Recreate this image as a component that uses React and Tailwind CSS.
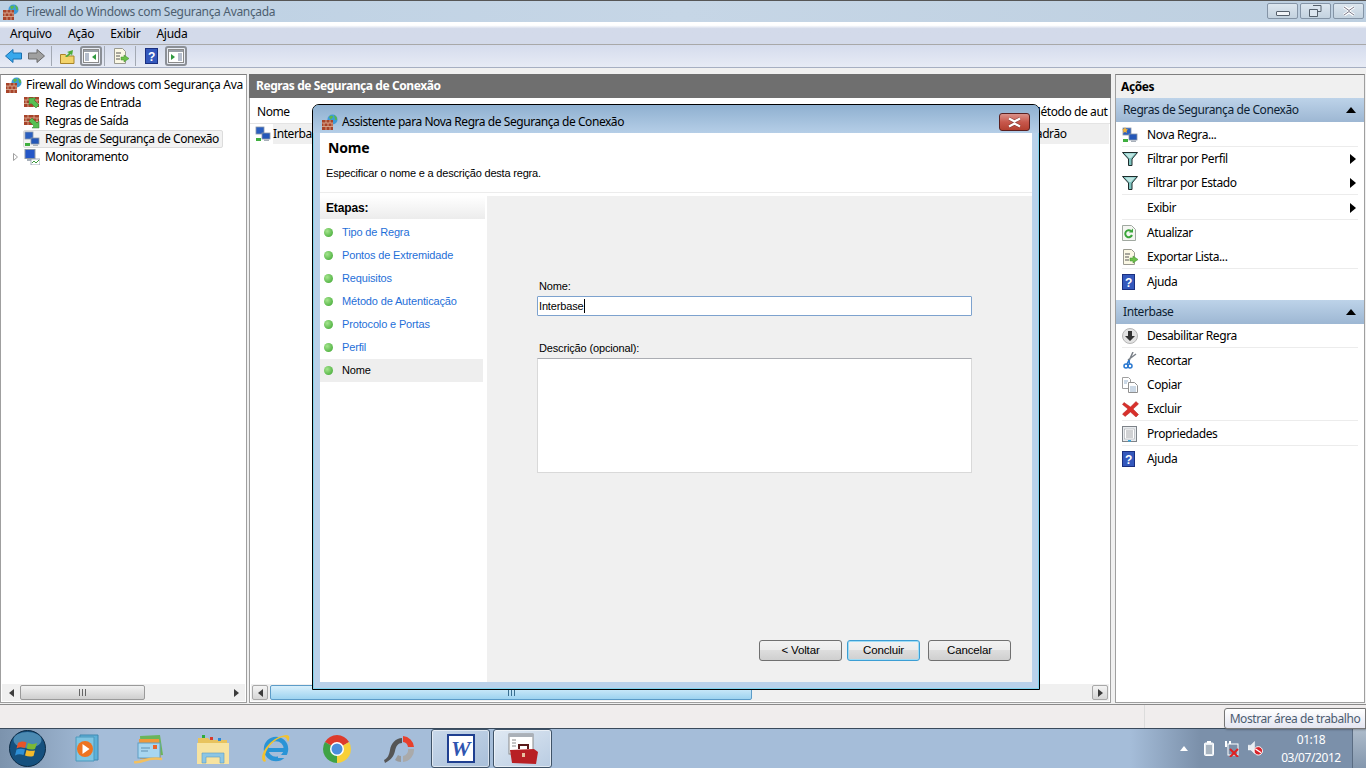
import React from "react";

const Sep = ({ className = "" }) => <div className={`w-px h-[20px] bg-[#a3a9b3] ${className}`} />;

function Brick({ s = 16 }) {
  return (
    <svg width={s} height={s} viewBox="0 0 16 16" className="shrink-0">
      <circle cx="10.500" cy="5.500" r="5" fill="#3f9bd8" />
      <path d="M7 3c2-2 4-1 4 0s-2 1-2 3M12 1c2 1 3 2 3 4s-2 1-2 0" fill="#5cb848" />
      <rect x="0" y="6" width="11" height="10" fill="#a8442a" />
      <path d="M0 9h11M0 12.500h11M4 6v3M8 6v3M2 9v3.500M6 9v3.500M10 9v3.500M4 12.500v3.500M8 12.500v3.500" stroke="#dcb49c" strokeWidth=".8" />
    </svg>
  );
}

function RuleBrick({ out }) {
  return (
    <svg width="16" height="16" viewBox="0 0 16 16" className="shrink-0">
      <rect x="0" y="2" width="15" height="10" fill="#a8442a" />
      <path d="M0 5h15M0 8.500h15M4 2v3M10 2v3M2 5v3.500M7 5v3.500M13 5v3.500M4 8.500v3.500M10 8.500v3.500" stroke="#dcb49c" strokeWidth=".8" />
      {out
        ? <path d="M15 15H8l2-2-5-5 3-3 5 5 2-2z" fill="#57c052" stroke="#2c7d2c" strokeWidth=".5" />
        : <path d="M5 3h7l-2 2 5 5-3 3-5-5-2 2z" fill="#57c052" stroke="#2c7d2c" strokeWidth=".5" />}
    </svg>
  );
}

function Computers({ star }) {
  return (
    <svg width="16" height="16" viewBox="0 0 16 16" className="shrink-0">
      <rect x="1" y="1" width="8" height="7" fill="#2a5fc0" stroke="#8a97a8" strokeWidth=".8" />
      <rect x="7" y="7" width="8" height="6" fill="#2457b8" stroke="#8a97a8" strokeWidth=".8" />
      <rect x="9" y="13.500" width="5" height="1.500" fill="#a8b0ba" />
      <rect x="1" y="12" width="5" height="3" fill="#3faf3f" />
      {star && <path d="M3 0l1 2 2 .5-1.500 1.500.5 2-2-1-2 1 .5-2L0 2.500 2 2z" fill="#f2b33a" />}
    </svg>
  );
}

function Monitor() {
  return (
    <svg width="16" height="16" viewBox="0 0 16 16" className="shrink-0">
      <rect x="1" y="0.500" width="10" height="9" fill="#2457c8" stroke="#8a97a8" />
      <rect x="3" y="10" width="6" height="2" fill="#a8b0ba" />
      <rect x="7" y="10" width="9" height="6" fill="#fff" stroke="#8a97a8" strokeWidth=".8" />
      <path d="M8 14l2-2 2 2 3-3" stroke="#3a9a3a" fill="none" />
    </svg>
  );
}

function Funnel() {
  return (
    <svg width="16" height="14" viewBox="0 0 16 14" className="shrink-0">
      <path d="M.500 .500h15L10 7v6.500H6.500V7z" fill="#7fc4c0" stroke="#1d2b2b" />
      <path d="M3 1.500h10L9 6H7z" fill="#bfe6e2" />
    </svg>
  );
}

function Help() {
  return (
    <svg width="13" height="16" viewBox="0 0 13 16" className="shrink-0">
      <rect x=".500" y=".500" width="12" height="15" fill="#3458bc" stroke="#1a2f80" />
      <text x="6.500" y="12.500" textAnchor="middle" fontSize="12" fontWeight="700" fill="#fff" fontFamily="Liberation Sans, sans-serif">?</text>
    </svg>
  );
}

function ExportIcon() {
  return (
    <svg width="16" height="16" viewBox="0 0 16 16" className="shrink-0">
      <path d="M1.500 .500h8l3 3v12h-11z" fill="#fbf8e4" stroke="#9a9a90" />
      <path d="M3 5h5M3 8h4M3 11h4" stroke="#555" />
      <path d="M8 9h3V7l5 3.500-5 3.500v-2H8z" fill="#6cc04a" stroke="#3e8e2a" strokeWidth=".5" />
    </svg>
  );
}

function Refresh() {
  return (
    <svg width="14" height="16" viewBox="0 0 14 16" className="shrink-0">
      <path d="M.500 .500h9l4 4v11H.500z" fill="#f4f6f2" stroke="#a0a8a0" />
      <path d="M10 10a3.500 3.500 0 1 1-1-4" fill="none" stroke="#3aa53a" strokeWidth="2" />
      <path d="M11 3.500v4H7z" fill="#3aa53a" />
    </svg>
  );
}

function Disable() {
  return (
    <svg width="16" height="16" viewBox="0 0 16 16" className="shrink-0">
      <circle cx="8" cy="8" r="7.500" fill="#e3e3e3" stroke="#b5b5b5" />
      <path d="M6 3h4v5h3l-5 5-5-5h3z" fill="#333" />
    </svg>
  );
}

function Scissors() {
  return (
    <svg width="16" height="17" viewBox="0 0 16 17" className="shrink-0">
      <path d="M11 0L6.500 10M14 2L6 8" stroke="#7a8088" strokeWidth="1.500" />
      <circle cx="4" cy="14" r="2" fill="none" stroke="#2a78d0" strokeWidth="1.500" />
      <circle cx="8" cy="14" r="2" fill="none" stroke="#2a78d0" strokeWidth="1.500" />
      <path d="M5 12l2-4M7.500 12L7 8" stroke="#2a78d0" strokeWidth="1.500" />
    </svg>
  );
}

function Copy() {
  return (
    <svg width="16" height="16" viewBox="0 0 16 16" className="shrink-0">
      <path d="M.500 .500h6l2 2v9h-8z" fill="#fff" stroke="#a0a0a0" />
      <path d="M6.500 5.500h6l3 3v7h-9z" fill="#fff" stroke="#909090" />
      <path d="M8 10h6M8 12h6M8 14h6M2 4h4M2 6h3" stroke="#7f9fc0" strokeWidth=".8" />
    </svg>
  );
}

function Delete() {
  return (
    <svg width="17" height="16" viewBox="0 0 17 16" className="shrink-0">
      <path d="M2 1.500L8.500 6 14 .500 16.500 3 11 8l5.500 5.500L14 16l-5.500-5L3 15.500.500 13 6 8 .500 3.500z" fill="#d9302b" stroke="#b0201c" strokeWidth=".5" />
    </svg>
  );
}

function Props() {
  return (
    <svg width="15" height="16" viewBox="0 0 15 16" className="shrink-0">
      <rect x=".500" y=".500" width="14" height="15" fill="#e8ebee" stroke="#7d8288" />
      <rect x="2.500" y="3" width="10" height="10" fill="#fff" stroke="#a5a9ad" strokeWidth=".6" />
      <path d="M4 5h7M4 7h7M4 9h7M4 11h7" stroke="#8a8e92" strokeWidth=".8" />
      <rect x="6" y="14" width="3" height="1.500" fill="#35a8e0" />
    </svg>
  );
}

function PaneIcon({ right }) {
  return (
    <div className="w-[22px] h-[20px] border-2 border-[#8b8f96] rounded-[3px] bg-[#e8ecf4] flex items-center justify-center shrink-0">
      <svg width="16" height="14" viewBox="0 0 16 14">
        <rect x=".500" y=".500" width="15" height="13" fill="#fff" stroke="#8a8a8a" />
        <rect x="1" y="1" width="14" height="2" fill="#9aa0a8" />
        {right ? (
          <>
            <path d="M3 5l4 3-4 3z" fill="#2f9a3f" />
            <path d="M10 5h4M10 7h4M10 9h4M10 11h4" stroke="#6b7c99" />
          </>
        ) : (
          <>
            <path d="M2 5h4M2 7h4M2 9h4M2 11h4" stroke="#6b7c99" />
            <path d="M13 5l-4 3 4 3z" fill="#2f9a3f" />
          </>
        )}
      </svg>
    </div>
  );
}

function ScrollBar({ className, thumb, blue }) {
  const Arrow = ({ left }) => (
    <div className={`w-[16px] h-[15px] flex items-center justify-center shrink-0 ${blue ? "bg-gradient-to-b from-[#f4f4f4] to-[#d6d6d6] border border-[#a8a8a8] rounded-[2px]" : ""}`}>
      <svg width="5" height="8" viewBox="0 0 5 8">
        <path d={left ? "M5 0v8L0 4z" : "M0 0v8l5-4z"} fill="#3c3c3c" />
      </svg>
    </div>
  );
  return (
    <div className={`h-[17px] bg-[#f0f0f0] flex items-center px-[1px] ${className}`}>
      <Arrow left />
      <div className="flex-1 h-[15px] flex">
        <div
          className={`h-full rounded-[2px] border flex items-center justify-center ${thumb} ${
            blue
              ? "bg-gradient-to-b from-[#d8effb] to-[#9dd3f0] border-[#5c9cc8]"
              : "bg-gradient-to-b from-[#f2f2f2] to-[#cfcfcf] border-[#9a9a9a]"
          }`}
        >
          <div className={`w-[7px] h-[7px] border-x-[1px] ${blue ? "border-[#3a6f90]" : "border-[#666]"} flex justify-center`}>
            <div className={`w-px h-full ${blue ? "bg-[#3a6f90]" : "bg-[#666]"}`} />
          </div>
        </div>
      </div>
      <Arrow />
    </div>
  );
}

function ActionRow({ icon, label, arrow, line, h }) {
  return (
    <div className={`${h} flex items-center pl-[6px] pr-[8px] relative`}>
      <div className="w-[25px] flex items-center shrink-0">{icon}</div>
      <span className="flex-1">{label}</span>
      {arrow && (
        <svg width="6" height="10" viewBox="0 0 6 10">
          <path d="M0 0v10l6-5z" fill="#000" />
        </svg>
      )}
      {line && <div className="absolute left-[6px] right-[6px] bottom-0 h-px bg-[#ececec]" />}
    </div>
  );
}

function GroupHeader({ label }) {
  return (
    <div className="h-[24px] shrink-0 bg-gradient-to-b from-[#bdd3e9] to-[#9db7d3] flex items-center justify-between pl-[7px] pr-[8px] text-[#0d1e33]">
      <span>{label}</span>
      <svg width="10" height="6" viewBox="0 0 10 6">
        <path d="M0 6h10L5 0z" fill="#000" />
      </svg>
    </div>
  );
}

const Dot = () => (
  <span className="w-[9px] h-[9px] rounded-full bg-[radial-gradient(circle_at_35%_35%,#a5e58e,#38a32c)] ml-[4px] mr-[9px] shrink-0" />
);

const btn = "h-[21px] pt-[1px] rounded-[3px] border bg-[linear-gradient(#f2f2f2,#ebebeb_50%,#dddddd_50%,#cfcfcf)]";

function Dialog() {
  const steps = ["Tipo de Regra", "Pontos de Extremidade", "Requisitos", "Método de Autenticação", "Protocolo e Portas", "Perfil"];
  return (
    <div className="absolute left-[312px] top-[104px] w-[728px] h-[586px] rounded-t-[7px] border border-black shadow-[inset_0_0_0_1px_#7fd3ee] bg-[#b9d1ea] flex flex-col">
      <div className="h-[28px] flex items-center pl-[9px] pt-[6px] gap-[4px] shrink-0 relative rounded-t-[6px] bg-gradient-to-b from-[#8fb0d0] to-[#b5cee7]">
        <Brick />
        <span className="text-[12px] tracking-[-0.44px]">Assistente para Nova Regra de Segurança de Conexão</span>
        <div className="absolute right-[9px] top-[8px] w-[31px] h-[18px] rounded-[3px] border border-[#5a2020] bg-gradient-to-b from-[#d9918a] via-[#c8584c] to-[#b44030] flex items-center justify-center">
          <svg width="15" height="11" viewBox="0 0 15 11">
            <path d="M2 1.500l5.500 3 5.500-3M2 9.500l5.500-3 5.500 3" stroke="#4a2020" strokeWidth="3.400" fill="none" opacity=".5" />
            <path d="M2 1.500l5.500 3 5.500-3M2 9.500l5.500-3 5.500 3" stroke="#fff" strokeWidth="2.200" fill="none" />
          </svg>
        </div>
      </div>
      <div className="flex-1 mx-[7px] mb-[7px] flex flex-col bg-white font-['Liberation_Sans',sans-serif] text-[11px] tracking-[-0.15px] text-black min-h-0">
        <div className="h-[60px] border-b border-[#ececec] shrink-0 flex flex-col">
          <div className="pl-[8px] pt-[5px] text-[14px] font-bold font-['Noto_Sans',sans-serif] leading-[19px]">Nome</div>
          <div className="pl-[6px] pt-[9px] leading-[14px] tracking-[-0.2px]">Especificar o nome e a descrição desta regra.</div>
        </div>
        <div className="flex-1 flex pt-[3px] min-h-0">
          <div className="w-[165px] shrink-0 flex flex-col">
            <div className="h-[23px] bg-gradient-to-b from-white to-[#ececec] pl-[6px] flex items-center font-bold text-[12px]">Etapas:</div>
            <div className="pt-[2px] flex flex-col pr-[2px]">
              {steps.map((s) => (
                <div key={s} className="h-[23px] flex items-center">
                  <Dot />
                  <span className="text-[#1f6fd8]">{s}</span>
                </div>
              ))}
              <div className="h-[23px] flex items-center bg-[#eeeeee]">
                <Dot />
                <span>Nome</span>
              </div>
            </div>
          </div>
          <div className="flex-1 ml-[2px] bg-[#f0f0f0] flex flex-col pl-[50px] pr-[60px] pt-[83px] pb-[21px]">
            <div className="leading-[14px] pl-[2px]">Nome:</div>
            <div className="mt-[3px] h-[20px] bg-white border border-[#7da2ce] rounded-[1px] flex items-center pl-[1px]">
              <span>Interbase</span>
              <span className="w-px h-[14px] bg-black" />
            </div>
            <div className="mt-[25px] leading-[14px] pl-[2px]">Descrição (opcional):</div>
            <div className="mt-[3px] h-[115px] bg-white border border-[#d9d9d9] border-t-[#abadb3]" />
            <div className="flex-1" />
            <div className="flex justify-end -mr-[39px] text-[11.500px]">
              <button className={`${btn} w-[83px] border-[#707070]`}>&lt; Voltar</button>
              <button className={`${btn} w-[73px] ml-[5px] border-[#3c9ed4] shadow-[inset_0_0_0_1px_#9fdcf5]`}>Concluir</button>
              <button className={`${btn} w-[83px] ml-[8px] border-[#707070]`}>Cancelar</button>
            </div>
          </div>
        </div>
      </div>
    </div>
  );
}

function Taskbar() {
  return (
    <div className="h-[40px] shrink-0 flex items-center border-t border-[#3a4a5c] bg-[linear-gradient(90deg,#7c93ad_0,#a5bdd9_100px,#a5bdd9_1130px,#7b90aa_1200px)] relative">
      <div className="w-[54px] flex justify-center shrink-0">
        <svg width="37" height="37" viewBox="0 0 37 37">
          <circle cx="18.500" cy="18.500" r="18" fill="#15507e" stroke="#0c2a44" />
          <ellipse cx="18.500" cy="10" rx="14" ry="8" fill="#6fb0d6" opacity=".6" />
          <path d="M9 13c3-2 6-2 8.500-.500L16 18c-3-1-6-1-8.500.500z" fill="#e8552a" />
          <path d="M19 13c3 1.500 6 1.500 9 0l-2 6c-3 1-6 .500-8.500-.500z" fill="#7cb834" />
          <path d="M7.500 19.500c3-1 5.500-1 8.500 0L14.500 25c-3-1-6-1-8.500.500z" fill="#2e8fd6" />
          <path d="M17.500 20c3 1 5.500 1 8.500.500L24.500 26c-3 1-6 .500-8.500-.500z" fill="#f4b92c" />
        </svg>
      </div>
      <div className="w-[62px] flex justify-center shrink-0 ml-[3px]">
        <svg width="28" height="30" viewBox="0 0 28 30">
          <path d="M6 1h18v25H6z" fill="#5cb0d8" stroke="#3e88b0" />
          <path d="M2 3h18v24H2z" fill="#7fc5e2" stroke="#4d98bc" />
          <circle cx="11" cy="15" r="8" fill="#ee7320" />
          <path d="M8.500 10l7 5-7 5z" fill="#fff" />
        </svg>
      </div>
      <div className="w-[62px] flex justify-center shrink-0">
        <svg width="32" height="30" viewBox="0 0 32 30">
          <path d="M6 2l20-1 3 20-22 2z" fill="#6ab55a" />
          <path d="M5 5h20l2 20H6z" fill="#f0983a" />
          <rect x="4" y="9" width="22" height="15" fill="#a8d6f0" stroke="#5f9ec4" />
          <rect x="19" y="11" width="4" height="4" fill="#e8632c" />
          <path d="M7 14h9M7 17h7" stroke="#5f8fb0" />
          <path d="M0 28c8 2 12-6 28-3" stroke="#f2c060" strokeWidth="2.500" fill="none" />
        </svg>
      </div>
      <div className="w-[63px] flex justify-center shrink-0">
        <svg width="32" height="30" viewBox="0 0 32 30">
          <path d="M1 4h10l2 2h17v24H1z" fill="#e8c35e" />
          <rect x="5" y="1" width="3" height="3" fill="#2dab3a" />
          <rect x="13" y="3" width="3" height="3" fill="#d83a2c" />
          <rect x="21" y="4" width="3" height="3" fill="#2a88d8" />
          <path d="M0 9h32v21H0z" fill="#f7e3a0" />
          <path d="M5 19h22v10h-4v-6H9v6H5z" fill="#8cc6e4" stroke="#5c9cc4" strokeWidth=".6" />
        </svg>
      </div>
      <div className="w-[62px] flex justify-center shrink-0">
        <svg width="30" height="32" viewBox="0 0 30 32">
          <circle cx="16" cy="16" r="10" fill="none" stroke="#2a94d6" strokeWidth="4.500" />
          <path d="M7 15h18v4H7z" fill="#2a94d6" />
          <path d="M18 22h9v3h-9z" fill="#a5bdd9" />
          <path d="M3 28C-1 22 10 4 26 2c4 0 4 3 2 7-1-5-4-6-8-4C10 9 2 22 6 28c-1 1-2 1-3 0z" fill="#f2c230" />
        </svg>
      </div>
      <div className="w-[62px] flex justify-center shrink-0">
        <svg width="30" height="30" viewBox="0 0 30 30">
          <path d="M15 15L2.900 8A14 14 0 0 1 27.100 8z" fill="#dd3b2c" />
          <path d="M15 15L2.900 8A14 14 0 0 0 15 29z" fill="#3fa344" />
          <path d="M15 15L15 29A14 14 0 0 0 27.100 8z" fill="#f7d038" />
          <circle cx="15" cy="15" r="7" fill="#fff" />
          <circle cx="15" cy="15" r="5.500" fill="#4a8fdc" />
        </svg>
      </div>
      <div className="w-[62px] flex justify-center shrink-0">
        <svg width="32" height="32" viewBox="0 0 32 32">
          <path d="M1 27c4-2 5-5 6-10 1-7 6-12 12-12v5c-4 0-6 3-7 8-1 5-4 9-10 12z" fill="#555" />
          <path d="M20 3a12 12 0 0 1 11 11h-6a6 6 0 0 0-5-5z" fill="#e8402c" />
          <path d="M31 16a12 12 0 0 1-11 13v-6a6 6 0 0 0 5-7z" fill="#aaa" />
          <path d="M18 29a12 12 0 0 1-6-2l3-5a6 6 0 0 0 3 1z" fill="#999" />
        </svg>
      </div>
      <div className="w-[59px] h-[39px] ml-[1px] border border-[#3f5368] rounded-[3px] bg-gradient-to-br from-[#c8d8ea] to-[#a9bfd9] shadow-[inset_0_0_0_1px_#ffffff88] flex items-center justify-center shrink-0">
        <div className="w-[28px] h-[29px] bg-white border-2 border-[#1f3f90] flex items-center justify-center">
          <span className="font-['Liberation_Serif',serif] font-bold italic text-[#2f55b0] text-[22px] leading-none">W</span>
        </div>
      </div>
      <div className="w-[59px] h-[39px] ml-[3px] border border-[#3f5368] rounded-[3px] bg-gradient-to-br from-[#e0e9f3] to-[#b9cce2] shadow-[inset_0_0_0_1px_#ffffff88] flex items-center justify-center shrink-0">
        <svg width="32" height="32" viewBox="0 0 32 32">
          <rect x="2" y="1" width="24" height="20" fill="#fff" stroke="#8a8a8a" />
          <rect x="2" y="1" width="24" height="3" fill="#aab0b8" />
          <path d="M5 7h4M5 10h4M5 13h4" stroke="#8a8a8a" />
          <path d="M3 17l24-1 4 3-2 12-24-1z" fill="#b81f24" />
          <path d="M12 16v-4h9v4" fill="none" stroke="#5a1a1a" strokeWidth="2" />
          <rect x="15" y="20" width="3" height="4" fill="#e8c0a0" />
        </svg>
      </div>
      <div className="flex-1" />
      <svg width="8" height="5" viewBox="0 0 8 5" className="mr-[16px]">
        <path d="M0 5h8L4 0z" fill="#fff" />
      </svg>
      <svg width="10" height="15" viewBox="0 0 10 15" className="mr-[10px]">
        <rect x=".500" y="2" width="9" height="12.500" rx="1" fill="#e8edf2" stroke="#fff" />
        <rect x="3" y="0" width="4" height="2" fill="#fff" />
        <rect x="2" y="4" width="6" height="9" fill="#a8b4c0" />
      </svg>
      <svg width="16" height="16" viewBox="0 0 16 16" className="mr-[8px]">
        <rect x="4" y="3" width="10" height="11" fill="#7b8fa8" stroke="#fff" />
        <rect x="1" y="0" width="2" height="6" fill="#fff" />
        <rect x="5" y="0" width="2" height="3" fill="#fff" />
        <path d="M6 8l8 8M14 8l-8 8" stroke="#e02020" strokeWidth="2" />
      </svg>
      <svg width="15" height="15" viewBox="0 0 16 15" className="mr-[10px]">
        <path d="M0 4h3l4-4v13L3 9H0z" fill="#e8edf2" stroke="#fff" strokeWidth=".5" />
        <circle cx="11" cy="10" r="4.500" fill="#d8232a" stroke="#fff" />
        <path d="M8 8l6 4" stroke="#fff" strokeWidth="1.500" />
      </svg>
      <div className="w-[76px] text-center text-white text-[12px] leading-[18px] shrink-0 mr-[3px]">
        <div>01:18</div>
        <div>03/07/2012</div>
      </div>
      <div className="w-[14px] h-[39px] border-l border-[#5a6c82] bg-gradient-to-b from-[#aebccb] to-[#8497ad] shrink-0" />
    </div>
  );
}

export default function App() {
  return (
    <div className="w-[1366px] h-[768px] relative overflow-hidden bg-[#f0f0f0] flex flex-col text-[12px] text-black font-['Noto_Sans',sans-serif] tracking-[-0.42px]">
      <div className="h-[22px] shrink-0 border-t border-[#565656] bg-gradient-to-r from-[#bcd0e3] via-[#c6d6e6] to-[#bdcfe0] flex items-center pl-[3px] relative">
        <Brick />
        <span className="ml-[7px] text-[#4d5f70] tracking-[-0.32px]">Firewall do Windows com Segurança Avançada</span>
        <div className="absolute right-[2px] top-[2px] flex gap-[2px]">
          {[
            <div key="a" className="w-[14px] h-[5px] border border-[#55606c] bg-[#f0f4f8] rounded-[1px] mt-[5px]" />,
            <svg key="b" width="13" height="12" viewBox="0 0 13 12"><path d="M4 .500h8v6H9M.500 4.500h8v7h-8z" fill="#dbe5ef" stroke="#55606c" /></svg>,
            <svg key="c" width="14" height="10" viewBox="0 0 14 10"><path d="M2 1l5 3 5-3M2 9l5-3 5 3" stroke="#fff" strokeWidth="3" fill="none" /><path d="M2 1l5 3.500L12 1M2 9l5-3.500L12 9" stroke="#778" strokeWidth="1" fill="none" /></svg>,
          ].map((ic, i) => (
            <div key={i} className="w-[31px] h-[16px] border border-[#8494a6] rounded-[2px] bg-gradient-to-b from-[#dce6ef] to-[#c3d2df] flex items-center justify-center">
              {ic}
            </div>
          ))}
        </div>
      </div>
      <div className="h-[23px] shrink-0 bg-gradient-to-b from-white from-[15%] to-[#d3daea] to-[30%] border-b border-[#a8a8a8] flex items-center pl-[10px] gap-[16px] pt-[1px] tracking-[-0.25px]">
        <span>Arquivo</span>
        <span>Ação</span>
        <span>Exibir</span>
        <span>Ajuda</span>
      </div>
      <div className="h-[23px] shrink-0 bg-gradient-to-b from-[#d5dced] to-[#e7ebf5] border-b border-[#a6afc2] flex items-center pl-[5px]">
        <svg width="17" height="14" viewBox="0 0 17 14" className="mr-[6px]">
          <path d="M8 .500v3.500h8.500v6H8v3.500L.500 7z" fill="#38a8ec" stroke="#1a70b0" />
        </svg>
        <svg width="17" height="14" viewBox="0 0 17 14">
          <path d="M9 .500v3.500H.500v6H9v3.500L16.500 7z" fill="#a0a0a0" stroke="#6a6a6a" />
        </svg>
        <Sep className="ml-[6px] mr-[8px]" />
        <svg width="15" height="15" viewBox="0 0 15 15" className="mr-[5px]">
          <path d="M.500 5.500h5l1 1.500h7.500v7.500H.500z" fill="#f3d36a" stroke="#a8842a" />
          <path d="M5 8l4-4-2-1 6-2-1 6-1-2-4 3z" fill="#4ead3c" />
        </svg>
        <PaneIcon />
        <Sep className="ml-[2px] mr-[8px]" />
        <ExportIcon />
        <Sep className="ml-[6px] mr-[9px]" />
        <Help />
        <div className="ml-[7px]"><PaneIcon right /></div>
      </div>
      <div className="flex-1 min-h-0 flex pt-[6px] pb-[1px] bg-[#f0f0f0] relative">
        <div className="w-[247px] shrink-0 bg-white border border-[#9f9f9f] border-t-[#7f7f7f] flex flex-col">
          <div className="flex-1 pt-[1px] overflow-hidden whitespace-nowrap">
            <div className="h-[18px] flex items-center pl-[5px] gap-[4px] tracking-[-0.32px]">
              <Brick />
              <span>Firewall do Windows com Segurança Ava</span>
            </div>
            <div className="pl-[23px]">
              <div className="h-[18px] flex items-center gap-[5px]"><RuleBrick /> <span>Regras de Entrada</span></div>
              <div className="h-[18px] flex items-center gap-[5px]"><RuleBrick out /> <span>Regras de Saída</span></div>
              <div className="h-[18px] w-[200px] flex items-center gap-[5px] bg-[#f2f2f2] border border-[#dcdcdc] rounded-[2px] -ml-px tracking-[-0.48px]"><Computers /> <span>Regras de Segurança de Conexão</span></div>
              <div className="h-[18px] flex items-center gap-[5px] relative">
                <svg width="5" height="8" viewBox="0 0 5 8" className="absolute -left-[11px] top-[5px]"><path d="M.500 .500v7l4-3.500z" fill="#fff" stroke="#a0a0a0" /></svg>
                <Monitor /> <span>Monitoramento</span>
              </div>
            </div>
          </div>
          <ScrollBar thumb="w-[125px] ml-[1px]" className="mx-[1px] mb-[1px]" />
        </div>
        <div className="w-[862px] shrink-0 ml-[2px] flex flex-col bg-white border border-[#9f9f9f] border-t-0">
          <div className="h-[24px] bg-[#6f6f6f] text-white font-bold flex items-center pl-[7px] shrink-0 -mx-px">Regras de Segurança de Conexão</div>
          <div className="h-[25px] border-b border-[#e4e4e4] flex items-center pl-[7px] pt-[2px] mt-[1px] shrink-0 overflow-hidden">
            <span className="flex-1">Nome</span>
            <span className="w-[80px] whitespace-nowrap overflow-hidden">Método de aut</span>
          </div>
          <div className="h-[20px] bg-[#efefef] ml-[23px] mr-[1px] flex items-center relative shrink-0">
            <span className="flex-1">Interbase</span>
            <span className="w-[80px]">Padrão</span>
            <div className="absolute -left-[18px] top-[2px]"><Computers /></div>
          </div>
          <div className="flex-1" />
          <ScrollBar blue thumb="w-[482px] ml-[2px]" className="mx-[1px] mb-[1px]" />
        </div>
        <div className="w-[250px] shrink-0 ml-[4px] bg-white border border-[#9f9f9f] border-t-[#7f7f7f] flex flex-col">
          <div className="h-[23px] bg-[#f0f0f0] font-bold flex items-center pl-[5px] shrink-0">Ações</div>
          <GroupHeader label="Regras de Segurança de Conexão" />
          <ActionRow h="h-[25px]" icon={<Computers star />} label="Nova Regra..." line />
          <ActionRow h="h-[24px]" icon={<Funnel />} label="Filtrar por Perfil" arrow />
          <ActionRow h="h-[24px]" icon={<Funnel />} label="Filtrar por Estado" arrow line />
          <ActionRow h="h-[25px]" label="Exibir" arrow line />
          <ActionRow h="h-[25px]" icon={<Refresh />} label="Atualizar" />
          <ActionRow h="h-[24px]" icon={<ExportIcon />} label="Exportar Lista..." line />
          <ActionRow h="h-[25px]" icon={<Help />} label="Ajuda" />
          <div className="h-[6px] shrink-0" />
          <GroupHeader label="Interbase" />
          <ActionRow h="h-[24px]" icon={<Disable />} label="Desabilitar Regra" line />
          <ActionRow h="h-[25px]" icon={<Scissors />} label="Recortar" />
          <ActionRow h="h-[24px]" icon={<Copy />} label="Copiar" />
          <ActionRow h="h-[24px]" icon={<Delete />} label="Excluir" line />
          <ActionRow h="h-[25px]" icon={<Props />} label="Propriedades" line />
          <ActionRow h="h-[25px]" icon={<Help />} label="Ajuda" />
        </div>
      </div>
      <div className="h-[24px] shrink-0 border-t border-[#8a8a8a] bg-[#f0eded] flex justify-end">
        <div className="w-[222px] border-l border-[#dcdcdc]" />
      </div>
      <Taskbar />
      <Dialog />
      <div className="absolute left-[1224px] top-[708px] w-[142px] h-[21px] bg-gradient-to-b from-white to-[#e4e5f0] border border-[#767676] rounded-l-[3px] text-[#4c5c70] flex items-center justify-center shadow-[1px_1px_2px_#0004]">Mostrar área de trabalho</div>
    </div>
  );
}
